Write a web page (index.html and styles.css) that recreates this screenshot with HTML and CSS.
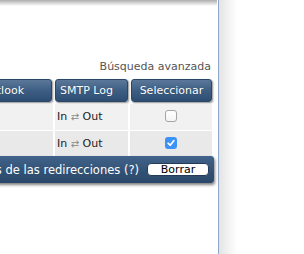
FILE: index.html
```html
<!DOCTYPE html>
<html>
<head>
<meta charset="utf-8">
<link rel="stylesheet" href="styles.css">
</head>
<body>
<div class="page">
  <div class="main">
    <div class="top-shade"></div>
    <div class="search-link">Búsqueda avanzada</div>
    <div class="table">
      <div class="row head">
        <div class="cell c1 hcell">Redirección Outlook</div>
        <div class="cell c2 hcell">SMTP Log</div>
        <div class="cell c3 hcell center">Seleccionar</div>
      </div>
      <div class="row body odd">
        <div class="cell c1"></div>
        <div class="cell c2">In <span class="arrows">⇄</span> Out</div>
        <div class="cell c3 center"><span class="check"></span></div>
      </div>
      <div class="row body even">
        <div class="cell c1"></div>
        <div class="cell c2">In <span class="arrows">⇄</span> Out</div>
        <div class="cell c3 center"><span class="check checked"><svg viewBox="0 0 12 12" width="12" height="12"><path d="M3.2 6.3 L5.2 8.2 L8.8 3.8" fill="none" stroke="#fff" stroke-width="1.8" stroke-linecap="round" stroke-linejoin="round"/></svg></span></div>
      </div>
      <div class="footer">
        <span class="footer-text">Borrar seleccionados de las redirecciones (?)</span>
        <button class="btn">Borrar</button>
      </div>
    </div>
  </div>
  <div class="divider"></div>
  <div class="side-shade"></div>
</div>
</body>
</html>
```
FILE: styles.css
```css
html, body {
  margin: 0;
  padding: 0;
  background: #fff;
}
body {
  font-family: "DejaVu Sans", Verdana, sans-serif;
  font-size: 11px;
  color: #222;
}
.page {
  display: flex;
  height: 254px;
}
.main {
  width: 218px;
  overflow: hidden;
  display: flex;
  flex-direction: column;
}
.top-shade {
  height: 6px;
  background: linear-gradient(#adadad, #fff);
  margin-right: 1px;
}
.search-link {
  margin-top: 54px;
  text-align: right;
  padding-right: 7px;
  color: #555;
  line-height: 13px;
  height: 13px;
}
.table {
  margin-top: 6px;
  margin-left: -100px;
  width: 313px;
  display: flex;
  flex-direction: column;
}
.row {
  display: flex;
  gap: 3px;
}
.cell {
  box-sizing: border-box;
  white-space: nowrap;
  overflow: hidden;
}
.c1 { width: 152px; }
.c2 { width: 73px; }
.c3 { width: 81px; }
.center { text-align: center; }
.head .hcell {
  height: 23px;
  line-height: 22px;
  color: #fff;
  padding-left: 4px;
  text-align: left;
  background: linear-gradient(#5b7899, #3d5e83 50%, #2e4d72);
  border: 1px solid #2b4666;
  border-radius: 3px;
  box-shadow: 1px 1px 2px rgba(0,0,0,0.45);
  text-shadow: 0 0 1px rgba(0,0,0,0.3);
}
.head .c1 { text-align: right; padding-right: 27px; }
.head .c3 { text-align: center; padding-left: 0; }
.row.body {
  gap: 2px;
}
.body .cell {
  height: 26px;
  line-height: 26px;
}
.body .c1 { width: 153px; }
.body .c2 { width: 73px; padding-left: 2px; }
.body .c3 { width: 82px; }
.odd { margin-top: 2px; }
.odd .cell { background: #f1f1f1; }
.even { margin-top: 1px; }
.even .cell { background: #e9e9e9; height: 25px; line-height: 25px; }
.arrows {
  color: #8a8a8a;
  font-size: 10px;
}
.check {
  display: inline-block;
  width: 12px;
  height: 12px;
  box-sizing: border-box;
  border: 1px solid #a5a5a5;
  border-radius: 3px;
  background: linear-gradient(#fff, #f4f4f4);
  vertical-align: middle;
  position: relative;
  top: -1px;
}
.check.checked {
  border: none;
  background: #3b93f7;
}
.check svg { display: block; }
.footer {
  width: 314px;
  height: 27px;
  box-sizing: border-box;
  display: flex;
  justify-content: flex-end;
  align-items: center;
  gap: 8px;
  padding-right: 5px;
  background: linear-gradient(#42638a, #315174 60%, #2a486a);
  border-radius: 0 3px 3px 0;
  box-shadow: 1px 2px 3px rgba(0,0,0,0.5);
  color: #fff;
  white-space: nowrap;
}
.footer-text {
  line-height: 14px;
  font-size: 11.5px;
}
.btn {
  font-family: "DejaVu Sans", Verdana, sans-serif;
  font-size: 11px;
  width: 62px;
  height: 13px;
  padding: 0;
  line-height: 11px;
  background: #fff;
  color: #000;
  border: 1px solid #233b57;
  border-radius: 4px;
  flex: 0 0 62px;
}
.divider {
  width: 1px;
  background: #8ba6c8;
}
.side-shade {
  width: 18px;
  background: linear-gradient(to right, #e4e4e4, #fff);
}
```
